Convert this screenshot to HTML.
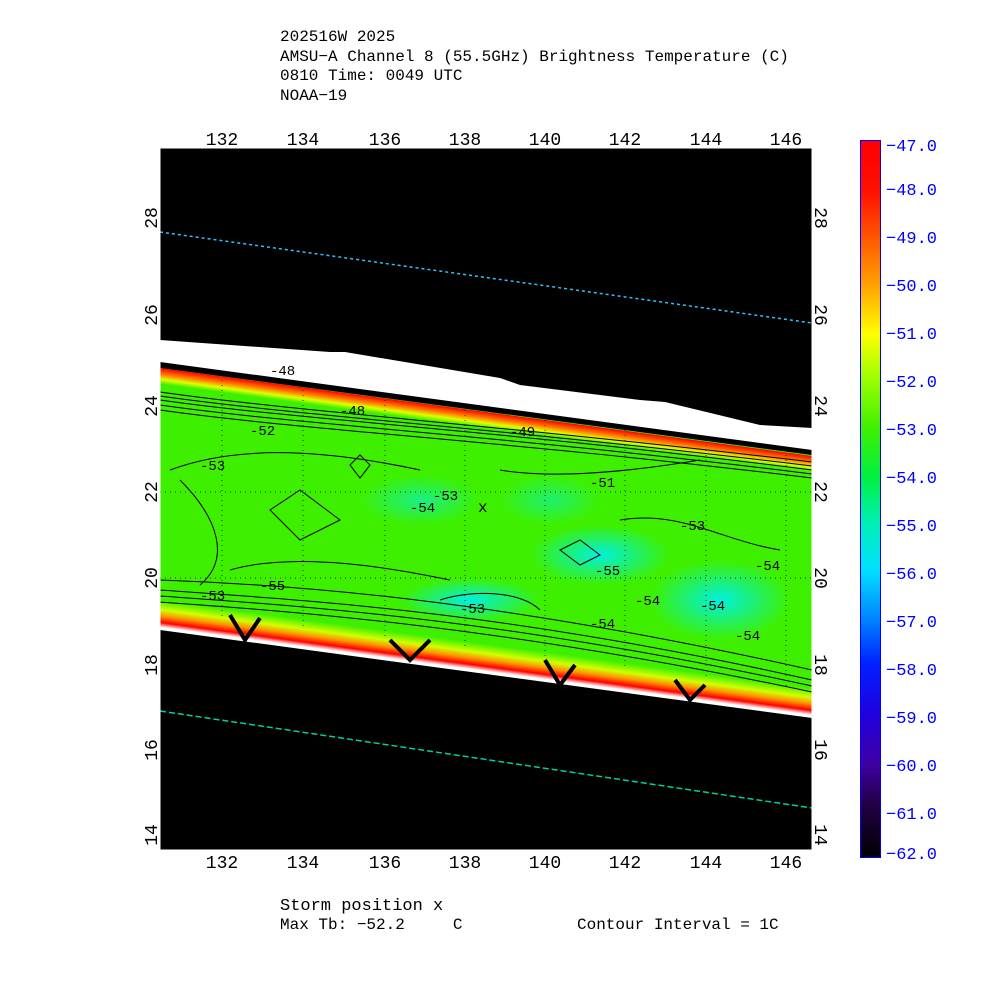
<!DOCTYPE html>
<html><head><style>
html,body{margin:0;padding:0;background:#fff;width:1000px;height:1000px;overflow:hidden}
svg{display:block}
text{font-family:"Liberation Mono",monospace;white-space:pre}
</style></head><body>
<svg width="1000" height="1000" viewBox="0 0 1000 1000">
<defs>
<linearGradient id="cb" x1="0" y1="0" x2="0" y2="1">
<stop offset="0" stop-color="#ff0000"/>
<stop offset="0.07" stop-color="#ff1000"/>
<stop offset="0.13" stop-color="#ff5000"/>
<stop offset="0.2" stop-color="#ffa000"/>
<stop offset="0.27" stop-color="#ffff00"/>
<stop offset="0.33" stop-color="#a0ff00"/>
<stop offset="0.4" stop-color="#40f000"/>
<stop offset="0.47" stop-color="#00f040"/>
<stop offset="0.53" stop-color="#00f0b0"/>
<stop offset="0.6" stop-color="#00e0ff"/>
<stop offset="0.67" stop-color="#0080ff"/>
<stop offset="0.73" stop-color="#0020ff"/>
<stop offset="0.8" stop-color="#2000e0"/>
<stop offset="0.87" stop-color="#4000a0"/>
<stop offset="0.93" stop-color="#200040"/>
<stop offset="1" stop-color="#000000"/>
</linearGradient>
<linearGradient id="rb" x1="0" y1="0" x2="0" y2="1">
<stop offset="0" stop-color="#3ef000"/><stop offset="0.3" stop-color="#d0ff00"/><stop offset="0.5" stop-color="#ff9000"/><stop offset="0.7" stop-color="#ff0000"/><stop offset="0.85" stop-color="#fff"/><stop offset="1" stop-color="#fff"/>
</linearGradient>
<linearGradient id="rt" x1="0" y1="0" x2="0" y2="1">
<stop offset="0" stop-color="#ff0000"/><stop offset="0.4" stop-color="#ff8000"/><stop offset="0.7" stop-color="#e0ff00"/><stop offset="1" stop-color="#3ef000"/>
</linearGradient>
<radialGradient id="cy" cx="0.5" cy="0.5" r="0.5"><stop offset="0" stop-color="#00f0e0"/><stop offset="1" stop-color="#00f0e0" stop-opacity="0"/></radialGradient>
</defs>
<text x="280" y="41" font-size="16">202516W 2025</text>
<text x="280" y="61" font-size="16">AMSU−A Channel 8 (55.5GHz) Brightness Temperature (C)</text>
<text x="280" y="80" font-size="16">0810 Time: 0049 UTC</text>
<text x="280" y="100" font-size="16">NOAA−19</text>

<rect x="159" y="147" width="653" height="703" fill="#000"/>
<polygon points="160,340 330,352 345,352 500,378 520,385 640,400 665,402 760,425 812,428 812,458 160,372" fill="#fff"/>
<polygon points="160,362 812,450 812,458 160,370" fill="#000"/>
<polygon points="160,368 812,455 812,700 160,612" fill="#3ef000"/>
<g transform="translate(160,368) skewY(7.69)"><rect width="652" height="16" fill="url(#rt)"/></g>
<ellipse cx="470" cy="600" rx="70" ry="22" fill="url(#cy)"/>
<ellipse cx="600" cy="555" rx="70" ry="30" fill="url(#cy)"/>
<ellipse cx="720" cy="600" rx="70" ry="40" fill="url(#cy)"/>
<ellipse cx="420" cy="500" rx="60" ry="25" fill="url(#cy)" opacity="0.6"/>
<ellipse cx="550" cy="500" rx="50" ry="25" fill="url(#cy)" opacity="0.5"/>
<g transform="translate(160,600) skewY(7.69)"><rect width="652" height="32" fill="url(#rb)"/></g>
<polygon points="160,630 812,718 812,850 160,850" fill="#000"/>
<g stroke="#000" stroke-width="4" fill="none">
<path d="M230,615 L245,640 L260,618"/><path d="M390,640 L410,660 L430,640"/><path d="M545,660 L560,685 L575,665"/><path d="M675,680 L690,700 L705,685"/>
</g>
<g stroke="#000" stroke-width="1" fill="none">
<path d="M160,392 C300,412 500,425 812,462"/>
<path d="M160,396 C300,416 500,428 812,466"/>
<path d="M160,400 C300,420 500,430 812,470"/>
<path d="M160,405 C300,425 500,435 812,474"/>
<path d="M160,410 C300,430 500,440 812,478"/>
<path d="M170,470 C250,440 350,455 420,470"/>
<path d="M160,590 C300,600 500,610 812,680"/>
<path d="M160,580 C300,585 500,600 812,670"/>
<path d="M160,596 C300,606 500,618 812,686"/>
<path d="M160,602 C300,612 500,626 812,692"/>
<path d="M230,570 C300,550 400,570 450,580"/>
<path d="M560,550 L580,540 L600,555 L580,565 Z"/>
<path d="M350,465 L360,455 L370,465 L360,478 Z"/>
<path d="M440,600 C470,590 520,590 540,610"/>
<path d="M620,520 C680,510 720,540 780,550"/>
<path d="M270,510 L300,490 L340,520 L300,540 Z"/>
<path d="M500,470 C560,480 640,470 700,460"/>
<path d="M180,480 C220,520 230,560 200,585"/>
</g>
<g font-size="14" fill="#000" font-family="Liberation Sans,sans-serif">
<text x="200" y="470">-53</text><text x="250" y="435">-52</text><text x="410" y="512">-54</text><text x="433" y="500">-53</text>
<text x="595" y="575">-55</text><text x="635" y="605">-54</text><text x="700" y="610">-54</text><text x="680" y="530">-53</text>
<text x="755" y="570">-54</text><text x="460" y="613">-53</text><text x="590" y="628">-54</text><text x="735" y="640">-54</text>
<text x="260" y="590">-55</text><text x="200" y="600">-53</text><text x="590" y="487">-51</text><text x="510" y="436">-49</text>
<text x="340" y="415">-48</text><text x="270" y="375">-48</text>
</g>
<text x="478" y="512" font-size="16" fill="#000">x</text>
<g stroke="#000" stroke-width="1" stroke-dasharray="1,4" opacity="0.7">
<line x1="222" y1="380" x2="222" y2="620"/><line x1="303" y1="390" x2="303" y2="630"/><line x1="385" y1="400" x2="385" y2="640"/><line x1="465" y1="410" x2="465" y2="650"/><line x1="545" y1="420" x2="545" y2="660"/><line x1="625" y1="430" x2="625" y2="670"/><line x1="706" y1="440" x2="706" y2="680"/><line x1="786" y1="450" x2="786" y2="690"/>
<line x1="160" y1="492" x2="812" y2="492"/><line x1="160" y1="578" x2="812" y2="578"/>
</g>
<path d="M160,232 L812,323" stroke="#30c0ff" stroke-width="1.5" stroke-dasharray="3,3"/>
<path d="M160,711 L812,808" stroke="#00d0a0" stroke-width="1.5" stroke-dasharray="6,3"/>

<rect x="159.5" y="147.5" width="653" height="703" fill="none" stroke="#fff" stroke-width="2"/>
<g font-size="18" fill="#000" font-family="Liberation Sans,sans-serif" text-anchor="middle">
<text x="222" y="145">132</text><text x="303" y="145">134</text><text x="385" y="145">136</text><text x="465" y="145">138</text><text x="545" y="145">140</text><text x="625" y="145">142</text><text x="706" y="145">144</text><text x="786" y="145">146</text>
<text x="222" y="868">132</text><text x="303" y="868">134</text><text x="385" y="868">136</text><text x="465" y="868">138</text><text x="545" y="868">140</text><text x="625" y="868">142</text><text x="706" y="868">144</text><text x="786" y="868">146</text>
<text transform="translate(157,218) rotate(-90)">28</text><text transform="translate(157,315) rotate(-90)">26</text><text transform="translate(157,406) rotate(-90)">24</text><text transform="translate(157,492) rotate(-90)">22</text><text transform="translate(157,578) rotate(-90)">20</text><text transform="translate(157,665) rotate(-90)">18</text><text transform="translate(157,750) rotate(-90)">16</text><text transform="translate(157,835) rotate(-90)">14</text>
<text transform="translate(815,218) rotate(90)">28</text><text transform="translate(815,315) rotate(90)">26</text><text transform="translate(815,406) rotate(90)">24</text><text transform="translate(815,492) rotate(90)">22</text><text transform="translate(815,578) rotate(90)">20</text><text transform="translate(815,665) rotate(90)">18</text><text transform="translate(815,750) rotate(90)">16</text><text transform="translate(815,835) rotate(90)">14</text>
</g>
<rect x="860.5" y="140.5" width="20" height="717" fill="url(#cb)" stroke="#00f" stroke-width="1"/>
<g font-size="17" fill="#00f" font-family="Liberation Sans,sans-serif">
<text x="886" y="151">−47.0</text><text x="886" y="195">−48.0</text><text x="886" y="243">−49.0</text><text x="886" y="291">−50.0</text><text x="886" y="339">−51.0</text><text x="886" y="387">−52.0</text><text x="886" y="435">−53.0</text><text x="886" y="483">−54.0</text><text x="886" y="531">−55.0</text><text x="886" y="579">−56.0</text><text x="886" y="627">−57.0</text><text x="886" y="675">−58.0</text><text x="886" y="723">−59.0</text><text x="886" y="771">−60.0</text><text x="886" y="819">−61.0</text><text x="886" y="859">−62.0</text>
</g>
<text x="280" y="910" font-size="17">Storm position x</text>
<text x="280" y="929" font-size="16" xml:space="preserve">Max Tb: −52.2     C</text>
<text x="577" y="929" font-size="16">Contour Interval = 1C</text>
</svg>
</body></html>
